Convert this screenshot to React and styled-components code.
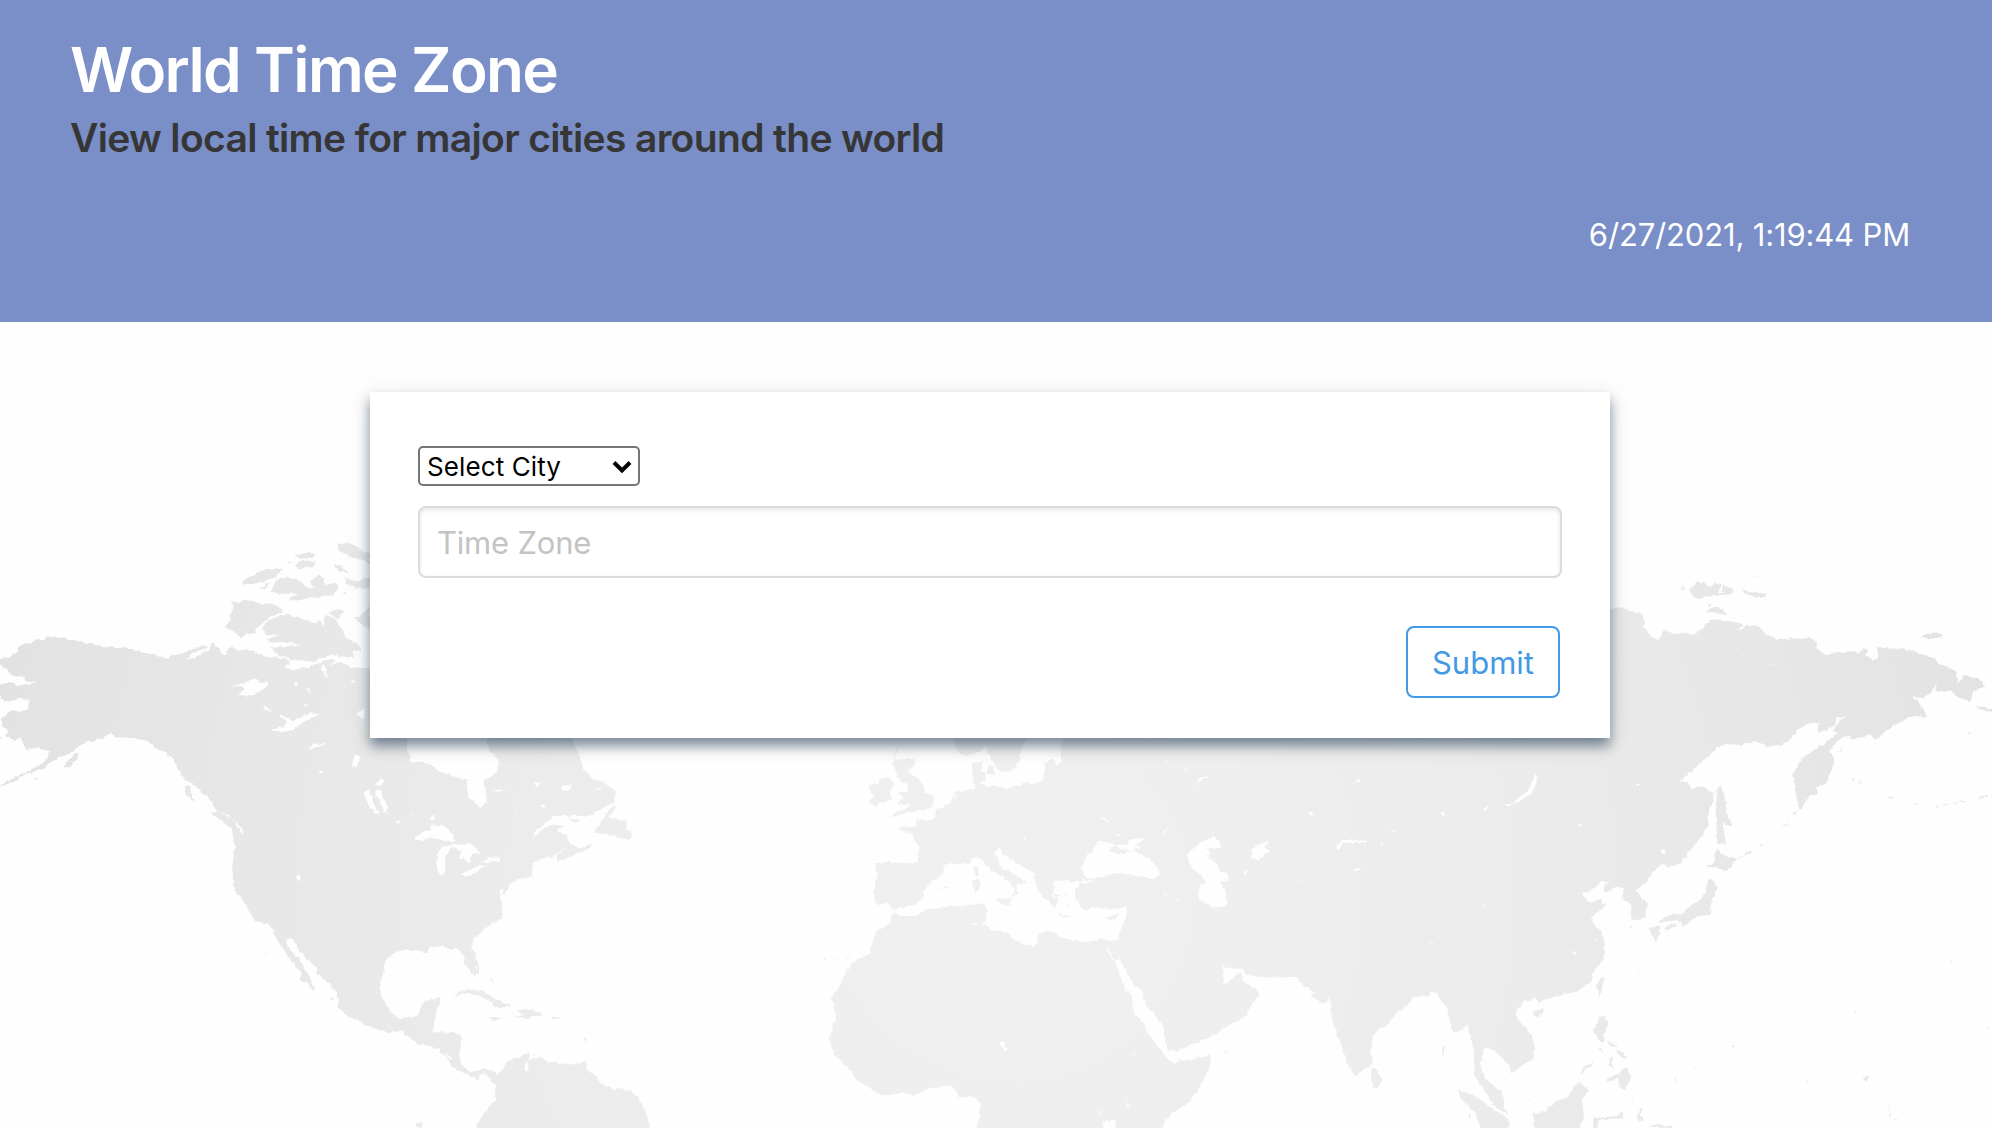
import React from "react";
import styled, { createGlobalStyle } from "styled-components";

const GlobalStyle = createGlobalStyle`
  *, *::before, *::after { box-sizing: border-box; }
  body {
    margin: 0;
    background: #fefefe;
    font-family: Inter, "Liberation Sans", sans-serif;
    -webkit-font-smoothing: antialiased;
  }
`;

const Page = styled.div`
  position: relative;
  height: 1128px;
  overflow: hidden;
  display: flex;
  flex-direction: column;
  align-items: center;
`;

const Backdrop = styled.svg`
  position: absolute;
  inset: 0;
  z-index: -1;
`;

const Header = styled.header`
  width: 100%;
  height: 322px;
  padding: 34px 82px 0 70px;
  background: #7a8ec8;
  display: flex;
  flex-direction: column;
`;

const Title = styled.h1`
  margin: 0;
  color: #fff;
  font-size: 62px;
  font-weight: 600;
  line-height: 72px;
  letter-spacing: -1.65px;
`;

const Subtitle = styled.h2`
  margin: 8px 0 0;
  color: #363636;
  font-size: 39px;
  font-weight: 600;
  line-height: 48px;
  letter-spacing: -0.65px;
`;

const Clock = styled.time`
  align-self: flex-end;
  margin-top: 49px;
  color: #fff;
  font-size: 31px;
  line-height: 48px;
  letter-spacing: -0.16px;
`;

const Card = styled.form`
  width: 1240px;
  height: 346px;
  margin: 70px 12px 0 0;
  padding: 54px 48px 40px;
  background: #fff;
  box-shadow: 0 8px 12px rgba(29, 51, 81, 0.56), 0 2px 30px rgba(20, 60, 50, 0.06);
  display: flex;
  flex-direction: column;
  align-items: flex-start;
`;

const SelectBox = styled.label`
  width: 222px;
  height: 40px;
  padding: 1px 6px 0 7px;
  border: 2px solid #767676;
  border-radius: 5px;
  background: #fff;
  display: flex;
  align-items: center;
  justify-content: space-between;
`;

const CitySelect = styled.select`
  appearance: none;
  flex: 1;
  min-width: 0;
  height: 34px;
  padding: 0;
  border: 0;
  outline: 0;
  background: transparent;
  color: #000;
  font: 400 26px/34px Inter, sans-serif;
  letter-spacing: 0.1px;
`;

const ZoneInput = styled.input`
  width: 1144px;
  height: 72px;
  margin-top: 20px;
  padding: 0 17px;
  border: 2px solid #dbdbdb;
  border-radius: 8px;
  outline: 0;
  background: #fff;
  box-shadow: inset 0 2px 4px rgba(10, 10, 10, 0.1);
  font: 400 31px/48px Inter, sans-serif;
  letter-spacing: -0.2px;
  &::placeholder { color: #c3c3c3; opacity: 1; }
`;

const SubmitButton = styled.button`
  width: 154px;
  height: 72px;
  margin: 48px 2px 0 0;
  padding: 2px 0 0;
  align-self: flex-end;
  border: 2px solid #4299e6;
  border-radius: 8px;
  background: #fff;
  color: #4299e6;
  font: 400 31px/48px Inter, sans-serif;
`;

const regions = [
  {
    transform: "translate(0 520) scale(.33333)",
    land: [
      "0,418 30,412 50,395 55,380 75,374 100,362 130,358 158,346 175,354 195,352 205,362 230,364 300,375 310,382 380,382 430,398 470,406 505,418 515,402 540,402 600,380 622,378 608,392 580,398 556,420 600,405 628,388 635,370 650,380 662,397 678,404 685,384 697,380 712,394 740,388 800,410 850,415 872,428 850,442 885,450 950,434 975,420 1010,420 985,434 1030,428 1050,440 1110,446 1140,446 1140,1020 705,1020 707,975 695,930 725,945 732,930 715,912 640,850 620,832 570,780 545,735 525,690 515,678 503,698 480,685 440,662 400,655 350,650 330,640 300,657 270,665 240,676 225,690 190,710 160,722 130,745 70,768 22,792 0,800 20,782 60,765 100,745 130,728 142,715 148,695 110,685 75,690 65,655 45,660 15,645 28,635 8,620 5,602 22,578 40,572 62,575 85,565 86,540 70,535 20,545 0,535 0,495 35,485 50,498 108,487 75,480 72,470 40,468 10,440 0,435",
      "690,248 745,240 790,252 815,250 850,273 810,290 790,308 765,330 770,340 745,342 722,352 700,335 675,322 690,300 685,288 697,270 704,260",
      "785,325 805,300 860,280 875,290 900,293 945,310 960,300 975,325 970,285 1000,290 1030,330 1035,350 1085,380 1085,395 1060,390 1060,415 1000,405 940,425 880,420 825,400 815,382 905,375 860,365 815,368 800,355 845,345 795,342 798,333",
      "985,275 1010,268 1030,272 1025,285 1015,300",
      "722,190 740,175 790,148 845,145 830,170 800,180 770,190 730,198",
      "780,205 800,190 812,188 795,208",
      "812,215 830,180 860,172 900,180 918,200 945,208 930,185 955,165 970,175 972,195 1005,190 1015,208 1000,225 925,235 890,242 865,235 895,220 840,222",
      "883,108 930,96 948,105 938,114 910,115", "888,130 900,122 946,122 940,140 900,147 885,138",
      "855,124 876,126 870,132", "1010,72 1050,70 1090,92 1110,100 1110,130 1050,108 1015,92",
      "1005,132 1028,140 1043,157 1015,152", "1030,170 1060,185 1110,170 1110,205 1065,205 1040,190",
      "1025,215 1042,215 1034,223", "1060,292 1080,290 1110,260 1110,328 1080,312",
      "190,742 205,720 235,695 232,718 210,742", "550,800 575,800 572,825 587,845 560,828", "630,875 660,875 700,900 725,945 680,915",
      "0,650 8,655 0,660", "95,778 116,778 105,783",
    ],
    water: [
      "686,495 740,488 770,475 780,488 806,487 795,506 770,520 740,527 714,524 735,510 725,497",
      "805,630 850,622 860,606 830,578 880,602 930,580 960,582 910,605 880,630 845,637",
      "920,692 950,670 978,675 945,682", "1055,740 1065,705 1078,710 1068,738", "952,752 970,755 962,762",
      "1090,815 1110,808 1120,850 1140,885 1110,860", "1070,575 1095,570 1090,595 1070,590", "880,488 893,490 885,498",
      "912,500 942,518 925,513", "970,430 985,475 962,450", "1050,476 1068,488 1058,488", "905,556 925,553 915,560", "782,550 818,575 800,572",
    ],
  },
  {
    transform: "translate(150 740) scale(.33333)",
    land: [
      "0,-20 0,12 40,35 65,50 75,70 105,120 140,130 180,180 195,210 240,225 275,262 280,280 245,268 255,315 247,380 250,430 262,462 280,480 290,500 313,542 350,550 366,565 374,590 405,635 420,658 455,695 452,718 470,728 488,750 495,742 478,712 462,682 445,655 425,635 410,615 408,596 432,600 440,625 470,655 500,685 500,700 530,725 560,760 568,780 562,798 600,835 625,840 650,855 715,880 745,870 770,885 800,910 845,922 865,925 895,960 905,978 960,1010 985,1018 1000,1000 1020,1015 1035,1040 1035,1082 1010,1110 990,1140 975,1170 1500,1170 1490,1120 1470,1080 1445,1055 1420,1045 1390,1047 1350,1030 1340,1010 1312,990 1305,970 1250,972 1200,965 1187,962 1180,955 1150,955 1135,960 1137,938 1110,952 1070,965 1060,985 1042,1005 1025,990 1000,985 965,998 935,975 928,950 935,890 915,878 845,877 852,860 860,810 875,785 870,775 850,777 820,785 812,808 800,827 750,835 725,820 705,790 692,760 694,715 701,698 703,662 740,635 760,630 790,630 835,642 840,622 880,618 905,630 920,624 942,645 945,672 972,712 988,700 985,670 967,625 968,605 1005,565 1055,532 1058,490 1047,470 1055,447 1062,465 1090,425 1145,408 1148,368 1200,350 1250,325 1220,345 1225,362 1250,355 1320,325 1325,312 1290,322 1260,312 1250,285 1220,272 1245,255 1195,255 1145,295 1160,270 1210,228 1325,227 1350,210 1390,190 1397,155 1365,130 1320,110 1300,85 1280,30 1255,-20 1010,-20 1015,25 1045,60 1045,95 1000,125 1012,185 992,203 955,170 950,118 915,112 870,95 840,72 800,66 780,68 770,0 765,-20",
      "1385,200 1400,196 1375,232 1430,245 1425,265 1445,275 1440,300 1400,290 1335,278 1350,250",
      "912,770 930,752 965,747 1000,755 1050,782 1088,800 1032,802 1025,785 990,768 960,762 940,760",
      "1100,808 1150,808 1182,828 1145,828 1130,840 1120,832 1085,832 1120,825", "1205,831 1230,831 1225,838 1205,838", "1018,832 1040,832 1052,839 1035,842",
      "1250,232 1285,237 1292,246 1265,243", "1016,716 1022,712 1034,738", "1300,964 1308,964 1308,974 1290,974", "795,1150 820,1147 815,1164 798,1160", "1152,936 1160,948 1152,948", "1302,895 1309,898 1305,912", "540,770 552,776 548,782", "345,640 352,640 349,646",
    ],
    water: [
      "790,300 815,278 845,270 840,252 880,256 910,285 912,303 875,303 842,292 820,300",
      "860,345 875,320 905,318 885,350 886,395 870,405 860,385", "905,313 960,312 990,338 965,345 955,372 940,352 925,357 935,332 895,320",
      "935,402 970,382 1008,376 980,398 945,408", "995,365 1020,353 1050,352 1050,362 1005,367", "672,150 690,150 710,190 713,222 704,215 690,190", "640,160 655,170 685,222 675,220 655,190",
      "840,230 852,228 854,240 844,242", "735,245 752,238 745,252", "770,222 792,222 780,228", "437,402 450,405 452,420 442,415",
      "472,30 490,12 528,12 500,20", "608,75 615,48 627,62 615,82", "502,92 520,94 512,101", "675,135 690,115 704,122 688,140", "1150,128 1172,128 1160,142", "1028,150 1075,148 1045,155", "1232,142 1270,135 1260,150 1240,152", "1320,158 1362,138 1340,152",
      "1090,218 1108,200 1098,215", "1173,196 1182,193 1187,203 1177,207", "1125,960 1135,975 1138,990 1128,990", "885,938 905,950 908,960 890,950", "973,680 980,682 977,687", "1048,450 1060,445 1055,485",
    ],
  },
  {
    transform: "translate(820 730) scale(.33333)",
    land: [
      "735,10 720,60 725,95 710,102 690,85 675,105 670,150 640,165 620,155 560,178 530,165 500,170 480,160 500,130 480,120 492,92 455,102 460,150 465,178 405,188 385,225 345,240 343,265 320,272 290,268 290,290 238,292 245,305 275,310 285,330 298,350 293,395 250,400 200,395 165,400 172,430 162,490 170,522 205,522 225,543 235,535 285,525 310,505 320,465 370,432 370,405 400,400 440,402 465,380 490,392 505,415 570,455 583,480 575,500 600,490 588,470 598,460 628,465 600,445 550,415 522,370 540,352 545,370 600,405 640,430 645,465 670,500 705,535 715,510 690,490 705,480 695,455 740,450 780,455 765,480 770,510 790,540 830,530 880,540 920,530 915,570 890,632 840,628 805,640 720,622 700,605 660,605 650,622 655,640 640,650 580,630 570,612 520,600 488,580 505,545 490,520 440,525 320,538 290,558 240,558 222,547 205,585 165,605 155,650 140,675 100,695 75,730 60,765 35,805 48,860 28,925 40,970 70,1000 95,1025 105,1048 190,1100 240,1088 285,1095 330,1075 380,1065 400,1075 420,1102 460,1098 482,1120 480,1150 468,1200 1020,1200 1040,1165 1080,1135 1130,1080 1170,1010 1172,975 1110,990 1060,1000 1045,985 1030,970 1000,930 980,905 972,880 942,850 935,800 912,770 885,695 865,670 858,645 885,690 895,690 900,665 898,685 935,755 968,785 975,820 1010,860 1032,890 1042,960 1075,962 1150,928 1210,900 1210,10",
      "400,10 405,50 420,72 440,78 470,70 500,50 508,75 525,105 540,122 570,125 590,110 605,60 625,10",
      "245,20 225,60 220,90 245,92 240,85 285,85 285,100 265,125 300,150 320,190 345,200 335,235 290,242 225,258 210,262 250,235 275,228 230,222 250,205 235,190 265,180 262,155 245,160 225,120 218,100 232,50",
      "150,165 180,160 178,148 205,142 222,158 213,185 215,208 165,228 145,215 165,200 150,185", "525,507 575,505 570,530 545,522", "456,450 478,443 478,480 462,488", "462,415 475,410 475,438 466,440", "710,553 758,558 735,563", "860,565 905,545 885,568 868,570", "358,475 388,468 375,476", "78,688 92,670 85,688",
      "505,105 525,110 522,135 500,130", "485,135 495,138 495,155 485,150", "695,485 720,500 710,505", "672,500 700,515 695,525", "752,455 760,458 752,465", "730,490 742,492 735,500", "740,520 752,515 745,528", "14,680 20,684 16,692", "37,684 45,687 40,692",
    ],
    water: [
      "783,415 800,375 815,365 835,335 870,338 880,348 925,342 930,330 978,320 945,345 965,352 935,362 965,375 1000,395 1017,430 1003,447 960,440 910,428 880,430 850,440 800,445",
      "775,452 820,450 795,462", "538,935 552,940 555,952 570,953 555,965", "848,1194 850,1175 885,1170 887,1194", "918,1100 922,1120 932,1132 920,1128", "828,1155 843,1140 835,1155", "937,970 945,972 940,978", "838,258 872,278 850,272", "1025,308 1045,290 1035,310", "1130,165 1145,145 1165,138 1140,155", "872,488 880,495 875,498", "1070,505 1084,520 1078,520", "1028,492 1042,490 1035,498", "605,328 620,322 615,330", "680,90 690,75 700,90", "883,314 910,312 892,318", "1036,92 1042,95 1040,106", "1090,115 1108,120 1098,122", "400,198 412,195 403,210", "620,100 640,80 628,105", "445,580 482,580 465,583",
    ],
    top: ["865,360 890,348 900,358 930,360 905,372 885,372"],
  },
  {
    transform: "translate(1180 730) scale(.33333)",
    land: [
      "-5,10 1265,10 1265,452 1240,475 1205,488 1210,500 1235,520 1265,505 1265,535 1232,565 1250,590 1265,620 1265,690 1240,730 1235,755 1190,785 1140,795 1085,812 1078,825 1068,805 1035,812 1005,850 1020,875 1055,915 1065,960 1060,985 1020,1010 992,1030 990,1008 965,985 945,962 915,950 898,1005 915,1045 965,1085 970,1120 985,1155 940,1125 910,1075 882,1035 885,980 875,930 862,885 845,900 820,908 812,880 800,835 770,790 750,785 745,800 705,800 690,815 650,850 620,885 580,912 572,970 578,1000 550,1020 532,1038 515,1025 490,965 465,900 455,860 450,795 440,818 420,822 392,792 410,790 375,770 350,740 270,743 200,735 185,712 150,718 100,695 75,655 60,648 40,662 60,695 85,730 88,750 105,762 140,760 180,725 185,750 225,775 238,795 205,840 190,865 150,885 110,910 60,935 -5,953",
      "-5,992 45,988 92,976 85,1020 50,1085 20,1120 -5,1140",
      "576,1010 592,1020 607,1050 597,1073 578,1073 573,1045", "1055,852 1070,838 1093,835 1075,865", "828,1078 870,1090 915,1118 940,1140 985,1165 985,1200 905,1200 885,1150 850,1115",
      "1062,1200 1058,1150 1095,1145 1110,1125 1160,1100 1197,1055 1228,1082 1205,1105 1212,1150 1200,1200", "786,955 794,945 789,990", "863,1150 875,1162 868,1165", "1197,1038 1220,1010 1242,990 1230,1010", "1043,1105 1050,1105 1047,1112", "130,963 148,965 135,968",
    ],
    water: [
      "20,375 60,340 100,322 122,335 120,355 80,355 95,372 80,375 115,408 118,425 135,425 152,448 120,452 122,465 135,475 140,525 105,533 75,518 60,515 55,490 62,462 80,458 35,410",
      "212,385 215,360 232,345 268,332 255,350 268,362 235,390", "975,224 1000,220 1015,205 1045,180 1055,155 1070,130 1075,142 1062,180 1045,200 1010,215 985,230", "468,350 490,330 560,332 555,338 490,338 475,362",
      "512,417 545,413 530,424", "520,155 540,148 538,160", "782,250 792,248 795,258 785,260", "628,298 652,305 640,305", "48,168 58,145 85,138 60,150", "340,448 370,455 355,453", "915,228 922,232 914,248", "192,425 202,422 200,436", "388,250 402,248 393,258", "456,190 468,192", "906,524 920,528 914,532", "1195,288 1208,278 1200,290", "1175,660 1187,668 1183,675", "598,338 610,345 602,348", "748,638 760,640 752,644", "975,954 980,958 976,962", "777,305 800,298 788,300",
    ],
  },
  {
    transform: "translate(1550 560) scale(.33333)",
    land: [
      "150,148 180,150 205,142 240,152 275,158 285,185 280,200 300,225 325,242 345,208 370,222 405,218 440,222 455,205 485,178 550,185 580,192 560,210 600,195 635,205 640,218 680,237 780,235 800,245 800,268 830,285 860,275 930,278 935,265 958,268 945,285 970,300 985,290 980,262 1080,270 1140,290 1160,305 1220,335 1225,368 1240,348 1285,355 1308,378 1270,395 1262,425 1225,412 1205,392 1160,392 1155,375 1140,405 1120,415 1085,408 1110,430 1132,470 1095,468 1030,495 1000,520 975,540 960,522 905,540 900,528 880,530 862,545 840,575 855,600 845,630 835,665 800,680 800,705 780,705 750,750 735,690 730,640 755,595 800,565 865,520 850,512 870,482 888,470 860,475 855,495 805,520 808,488 780,490 755,498 710,550 660,560 620,545 570,555 530,552 500,565 440,620 390,662 415,668 425,690 445,675 465,682 490,700 490,730 478,745 475,800 440,850 390,910 360,920 330,915 300,945 295,962 260,990 290,1030 290,1070 240,1082 245,1040 218,1015 222,985 200,980 165,1000 160,985 172,965 150,962 125,990 95,1000 115,1030 175,1030 120,1075 150,1115 165,1150 160,1200 0,1200 0,520 150,520",
      "500,690 512,675 525,710 530,755 547,797 518,785 528,850 502,852 498,765", "500,868 525,890 558,898 545,915 525,937 505,925 470,922 490,905",
      "475,955 490,960 502,985 485,1020 480,1065 440,1068 425,1082 400,1100 385,1080 320,1090 355,1065 402,1060 408,1045 445,1025 465,1000", "295,1105 330,1095 330,1115 318,1145 305,1125", "342,1105 375,1088 380,1095 350,1112",
      "418,92 440,68 460,66 482,80 490,68 550,85 545,102 475,108 455,117 430,108", "575,90 610,98 650,100 645,112 620,110 585,102", "468,158 490,142 522,150 527,162 490,157", "472,132 488,132 478,142",
      "1115,235 1130,222 1160,216 1180,228 1150,236", "1275,438 1326,448 1326,456 1290,447", "860,575 882,558 875,568", "900,652 915,664 906,662", "925,663 940,670 930,670", "397,80 404,85 397,92", "390,132 408,138 400,138", "610,48 625,46 620,50", "1012,706 1034,712 1020,713", "1155,740 1165,733 1162,743", "1175,733 1200,730 1185,736", "1205,728 1222,726 1215,733", "1225,722 1252,720 1240,726", "1282,712 1326,702 1300,714", "1090,728 1110,732 1095,733", "1255,518 1266,524 1256,523", "725,765 745,750 735,764", "700,798 716,782 708,798", "600,870 608,872 590,885 582,884", "625,862 645,850 635,862", "560,900 580,882 570,897", "238,1100 250,1102 242,1105",
    ],
    water: ["335,870 347,870 344,882 337,880", "260,672 275,670 265,678", "85,795 97,788 90,798", "508,88 518,78 524,82 514,90 520,100 510,98", "576,284 585,286 580,289", "650,315 675,306 665,312", "132,1138 142,1140 137,1145", "66,1172 78,1182 72,1186", "1040,418 1050,418", "805,663 810,664 808,667"],
  },
  {
    transform: "translate(1400 860) scale(.37755 .33333)",
    land: [
      "518,380 530,355 543,350 540,375 528,408", "525,470 545,468 552,498 540,525 542,550 522,540 513,515", "547,660 575,640 600,622 612,660 595,690 580,682 575,655 550,665",
      "475,645 490,620 515,597 500,622", "512,804 512,775 550,770 575,768 592,753 590,775 530,778 520,804", "552,595 568,592 560,608 570,628 552,615", "572,570 595,578 600,600 582,592", "545,545 580,555 560,558", "535,560 538,580 525,565", "628,770 638,742 643,745 635,765 645,780 632,785", "655,800 690,795 720,798 725,804",
      "726,667 733,648 731,665", "879,555 886,558 880,563", "1228,655 1238,650 1238,665", "1075,665 1083,667 1076,672", "1295,730 1299,770 1295,770", "1201,453 1208,456 1204,461", "1458,302 1465,303 1463,309", "1436,297 1442,299 1438,301", "780,622 786,625 782,628", "1148,691 1152,693 1149,697", "1310,776 1318,778 1314,783", "1553,498 1558,500 1555,504", "628,335 640,320 635,332", "612,712 618,715 615,720",
    ],
    water: [],
  },
];

const Shapes = ({ items, fill }) => items.map((points) => <polygon key={points} points={points} fill={fill} />);

const WorldMap = () => (
  <Backdrop width="1992" height="1128" viewBox="0 0 1992 1128" aria-hidden="true">
    <defs>
      <radialGradient id="landTone" gradientUnits="userSpaceOnUse" cx="1010" cy="900" r="1050">
        <stop offset="0" stopColor="#f0f0f0" />
        <stop offset="0.17" stopColor="#efefef" />
        <stop offset="0.45" stopColor="#ececec" />
        <stop offset="0.68" stopColor="#e8e8e8" />
        <stop offset="1" stopColor="#e2e2e2" />
      </radialGradient>
      <filter id="coast" filterUnits="userSpaceOnUse" x="-10" y="500" width="2012" height="640" colorInterpolationFilters="sRGB">
        <feTurbulence type="fractalNoise" baseFrequency="0.18" numOctaves="2" seed="4" result="noise" />
        <feDisplacementMap in="SourceGraphic" in2="noise" scale="4.5" xChannelSelector="R" yChannelSelector="G" />
      </filter>
      <mask id="continents" maskUnits="userSpaceOnUse" x="0" y="0" width="1992" height="1128">
        <g filter="url(#coast)">
          {regions.map((r) => (
            <g key={r.transform} transform={r.transform}><Shapes items={r.land} fill="#fff" /></g>
          ))}
          {regions.map((r) => (
            <g key={r.transform} transform={r.transform}>
              <Shapes items={r.water} fill="#000" />
              <Shapes items={r.top || []} fill="#fff" />
            </g>
          ))}
        </g>
      </mask>
    </defs>
    <rect width="1992" height="1128" fill="url(#landTone)" mask="url(#continents)" />
  </Backdrop>
);

const Chevron = () => (
  <svg width="20" height="16" viewBox="0 0 20 16" fill="none" stroke="#000" strokeWidth="4">
    <path d="M2 3.5 10 11.5 18 3.5" />
  </svg>
);

export default function App() {
  return (
    <Page>
      <GlobalStyle />
      <WorldMap />
      <Header>
        <Title>World Time Zone</Title>
        <Subtitle>View local time for major cities around the world</Subtitle>
        <Clock>6/27/2021, 1:19:44 PM</Clock>
      </Header>
      <Card>
        <SelectBox>
          <CitySelect defaultValue=""><option value="">Select City</option></CitySelect>
          <Chevron />
        </SelectBox>
        <ZoneInput placeholder="Time Zone" />
        <SubmitButton type="button">Submit</SubmitButton>
      </Card>
    </Page>
  );
}
